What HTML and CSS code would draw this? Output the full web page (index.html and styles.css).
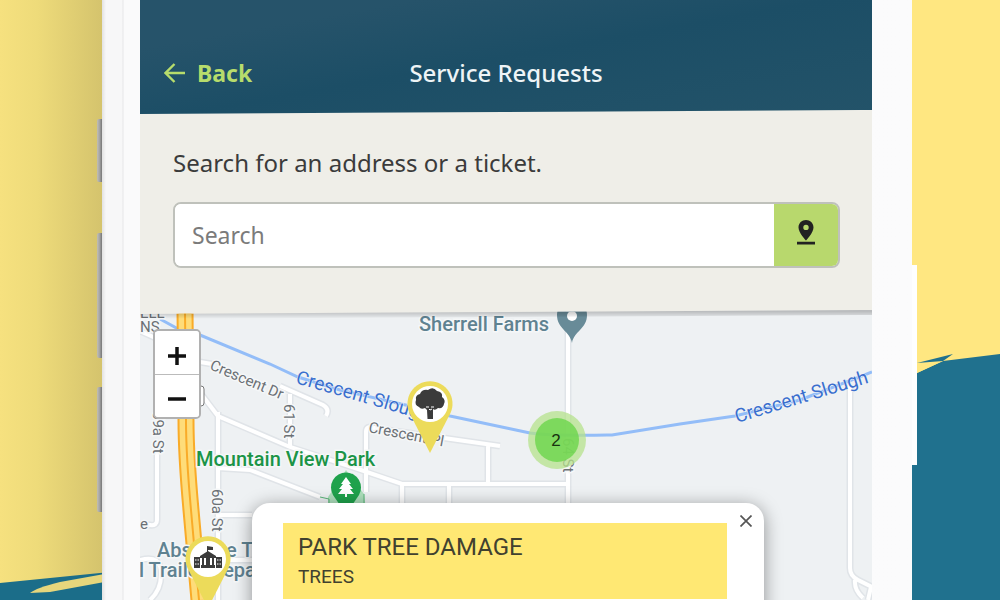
FILE: index.html
```html
<!DOCTYPE html>
<html lang="en">
<head>
    <meta charset="UTF-8">
    <meta name="viewport" content="width=device-width, initial-scale=1.0">
    <title>Service Requests</title>
    <link rel="stylesheet" href="styles.css">
</head>
<body>
    <svg class="backdrop" viewBox="0 0 1000 600" preserveAspectRatio="none" aria-hidden="true">
        <defs>
            <linearGradient id="shade">
                <stop offset="0" stop-color="#f6e17f"/>
                <stop offset="0.35" stop-color="#eedb7a"/>
                <stop offset="1" stop-color="#d3c26c"/>
            </linearGradient>
        </defs>
        <rect width="1000" height="600" fill="#ffe781"/>
        <rect width="106" height="600" fill="url(#shade)"/>
        <path d="M0 583L110 572V600H0z" fill="#1b6d89"/>
        <path d="M30 593Q36 588 60 582L110 573V581L50 592z" fill="#e6d67c"/>
        <path d="M900 378L917 373L943 361L1000 354V600H900z" fill="#20718e"/>
        <path d="M917 373L943 361L917 363z" fill="#ffe781"/>
        <path d="M917 363L953 354L943 361z" fill="#20718e"/>
    </svg>

    <div class="phone">
        <span class="side-key key-mute"></span>
        <span class="side-key key-up"></span>
        <span class="side-key key-down"></span>
        <span class="side-key key-power"></span>

        <main class="screen">
            <header class="top-bar">
                <a class="back" href="#">
                    <svg width="22" height="20" viewBox="0 0 22 20" aria-hidden="true">
                        <path d="M21 10H2M10.500 1L1.500 10L10.500 19" fill="none" stroke="currentColor" stroke-width="2.400"/>
                    </svg>
                    Back
                </a>
                <h1>Service Requests</h1>
            </header>

            <form class="search-panel">
                <label for="search">Search for an address or a ticket.</label>
                <div class="search-box">
                    <input id="search" type="text" placeholder="Search">
                    <button type="button" class="locate" aria-label="Pick on map">
                        <svg width="18" height="26" viewBox="0 0 18 26" aria-hidden="true">
                            <path d="M9 0C4.800 0 1.500 3.200 1.500 7.400C1.500 12.500 9 20.500 9 20.500S16.500 12.500 16.500 7.400C16.500 3.200 13.200 0 9 0zM9 4.700A2.700 2.700 0 1 1 9 10.100A2.700 2.700 0 1 1 9 4.700z" fill="#222" fill-rule="evenodd"/>
                            <path d="M0 21.800H18V24.500H0z" fill="#222"/>
                        </svg>
                    </button>
                </div>
            </form>

            <section class="map" aria-label="Map of requests">
                <svg class="map-canvas" viewBox="140 310 732 290" preserveAspectRatio="xMinYMin slice">
                    <defs>
                        <linearGradient id="topShadow" x2="0" y2="1">
                            <stop offset="0.300" stop-color="#000" stop-opacity="0.220"/>
                            <stop offset="1" stop-color="#000" stop-opacity="0"/>
                        </linearGradient>
                        <g id="pin">
                            <path d="M0 49L-20.500 9A22.500 22.500 0 1 1 20.500 9z" fill="#ecdb5a"/>
                            <circle r="18" fill="#fff"/>
                        </g>
                    </defs>
                    <rect x="140" y="310" width="732" height="290" fill="#eef1f3"/>

                    <!-- local roads -->
                    <g class="road-edge">
                        <path id="roads" d="M140 331L160 340L218 416L290 447L355 468L402 484H570M200 362L212 364M280 386L323 405Q330 409 326 416M290 394V447M218 412V600M157 450V520Q157 526 150 525H140M218 468L250 470L320 497M218 515H252M366 492V432Q366 425 374 428L500 446M488 445V484M402 484V510M449 486V510M568 310V510M850 385V568Q850 576 858 580L872 587M855 580Q854 590 863 598M871 587L868 600M140 560Q162 554 161 575Q161 590 150 600M218 560H260"/>
                    </g>
                    <use href="#roads" class="road"/>

                    <!-- river -->
                    <path class="river" d="M160 319L182 331L200 335L270 364L298 377L340 390L410 406L450 416L530 433Q550 436 612 435L680 424L735 416L800 400L872 372"/>

                    <!-- highway -->
                    <path d="M185 310L186 420Q186 455 191 510L199 600" class="highway-edge"/>
                    <path d="M185 310L186 420Q186 455 191 510L199 600" class="highway"/>
                    <path d="M185 310L186 420Q186 455 191 510L199 600" class="highway-line"/>

                    <!-- park -->
                    <path d="M328 497L346 470L364 494L366 510H328z" fill="#aee0bd"/>
                    <path d="M320 497L329 499V510M364 494V505" stroke="#5ab67a" fill="none"/>
                    <path d="M346 514L333 495A15 15 0 1 1 359 495z" fill="#1fa24c"/>
                    <path d="M346 477L341 484H343L339 489H342L338 494H345V497H347V494H354L350 489H353L349 484H351z" fill="#fff"/>

                    <!-- farm marker -->
                    <path d="M572 343C570 331 557 329 557 315A15 15 0 0 1 587 315C587 329 574 331 572 343z" fill="#688b98"/>
                    <circle cx="572" cy="316" r="5" fill="#fff"/>

                    <rect x="192" y="386" width="12" height="20" rx="3" fill="#fff" stroke="#777"/>

                    <g class="label road-label">
                        <text x="140" y="318">ELL</text>
                        <text x="140" y="332">NS</text>
                        <text transform="translate(209 369) rotate(23)">Crescent Dr</text>
                        <text transform="translate(284 404) rotate(90)">61 St</text>
                        <text transform="translate(153 411) rotate(90)">59a St</text>
                        <text transform="translate(212 489) rotate(90)">60a St</text>
                        <text transform="translate(563 438) rotate(90)">64 St</text>
                        <text transform="translate(368 432) rotate(11)">Crescent Pl</text>
                        <text x="140" y="529">e</text>
                    </g>
                    <g class="label water-label">
                        <text transform="translate(295 383) rotate(16)">Crescent Slough</text>
                        <text transform="translate(737 423) rotate(-17)">Crescent Slough</text>
                    </g>
                    <g class="label place-label">
                        <text x="419" y="331">Sherrell Farms</text>
                        <text x="196" y="466" class="park">Mountain View Park</text>
                        <text x="157" y="557">Absolute T</text>
                        <text x="139" y="577">l Trailer Repa</text>
                    </g>

                    <!-- cluster -->
                    <circle cx="557" cy="440" r="29" fill="#b5e28c" fill-opacity="0.750"/>
                    <circle cx="557" cy="440" r="22" fill="#6bd64b" fill-opacity="0.800"/>
                    <text x="556" y="446" class="cluster-count">2</text>

                    <g transform="translate(430 404)">
                        <use href="#pin"/>
                        <path d="M-2.500 15L-3 6L-5 4Q-9 6 -11 3Q-16 1 -14 -4Q-15 -9 -10 -10Q-8 -15 -2 -14Q3 -18 7 -13Q13 -12 12 -7Q16 -4 14 0Q13 5 8 4Q5 7 3 5L3 15z" fill="#3b3b3b"/>
                        <path d="M-4 3H-1M1 3H4M-1 5L0 6L2 5" stroke="#fff" fill="none"/>
                    </g>
                    <g transform="translate(208 559)">
                        <use href="#pin"/>
                        <path d="M-14 -2H-8V9H-14zM14 -2H8V9H14zM-8 -3L0 -8L8 -3V-1H-8zM-6 -1H-4V6H-6zM-2 -1H2V6H-2zM4 -1H6V6H4zM-7 6H7V9H-7zM-1 -13L5 -12V-9H0V-7H-1z" fill="#3b3b3b"/>
                        <path d="M-13 1H-9M-13 5H-9M9 1H13M9 5H13" stroke="#fff" stroke-dasharray="1.500 1"/>
                    </g>
                    <path d="M140 312L872 308V315L140 319z" fill="url(#topShadow)"/>
                </svg>

                <div class="zoom">
                    <button type="button" aria-label="Zoom in">
                        <svg width="20" height="20" viewBox="0 0 20 20"><path d="M1 10H19M10 1V19" stroke="#111" stroke-width="3.500"/></svg>
                    </button>
                    <button type="button" aria-label="Zoom out">
                        <svg width="20" height="20" viewBox="0 0 20 20"><path d="M1 10H19" stroke="#111" stroke-width="3.500"/></svg>
                    </button>
                </div>

                <article class="popup">
                    <button type="button" class="close" aria-label="Close">
                        <svg width="12" height="12" viewBox="0 0 12 12"><path d="M0.500 0.500L11.500 11.500M11.500 0.500L0.500 11.500" stroke="#555" stroke-width="1.700"/></svg>
                    </button>
                    <div class="ticket">
                        <h2>PARK TREE DAMAGE</h2>
                        <p>TREES</p>
                    </div>
                </article>
            </section>
        </main>
    </div>
</body>
</html>
```
FILE: styles.css
```css
* {
    box-sizing: border-box;
}

body {
    margin: 0;
    min-height: 100vh;
    display: flex;
    font-family: "Noto Sans", "Open Sans", sans-serif;
    background: #ffe781;
    overflow: hidden;
}

button {
    padding: 0;
    border: none;
    cursor: pointer;
    display: flex;
    align-items: center;
    justify-content: center;
}

.backdrop {
    position: fixed;
    width: 100%;
    height: 100%;
}

.phone {
    position: relative;
    flex: 1;
    display: flex;
    margin: 0 9% 0 10%;
    padding: 0 40px 0 38px;
    background: linear-gradient(90deg, #e2e2e2, #f7f7f8 4px, #f7f7f8 20px, #e6e6e8 21px, #fafafb 22px, #fafafb 50%, #fbfbfc);
    left: 2px;
}

/* hardware keys on the edges of the case */
.side-key {
    position: absolute;
    left: -5px;
    width: 5px;
    border-radius: 2px 0 0 2px;
    background: linear-gradient(90deg, #c2bfb5, #a5a5a5 50%, #777);
}

.key-mute {
    top: 119px;
    height: 63px;
}

.key-up {
    top: 233px;
    height: 125px;
}

.key-down {
    top: 387px;
    height: 125px;
}

.key-power {
    top: 265px;
    left: auto;
    right: -5px;
    height: 200px;
    border-radius: 0;
    background: #fefefe;
}

.screen {
    flex: 1;
    min-width: 0;
    display: flex;
    flex-direction: column;
    background: #efeee8;
}

/* the lower edges run slightly uphill */
.top-bar {
    display: grid;
    grid-template-columns: 1fr auto 1fr;
    align-items: center;
    padding: 56px 24px 24px;
    background: linear-gradient(170deg, #26536a 20%, #1c4e66 50%, #235369);
    clip-path: polygon(0 0, 100% 0, 100% calc(100% - 4px), 0 100%);
}

.back {
    display: flex;
    align-items: center;
    gap: 11px;
    color: #b7dc6c;
    font-size: 23px;
    line-height: 34px;
    font-weight: 700;
    text-decoration: none;
}

h1 {
    margin: 0;
    color: #eef4f6;
    font-size: 24px;
    line-height: 32px;
    font-weight: 500;
}

.search-panel {
    display: flex;
    flex-direction: column;
    gap: 22px;
    padding: 32px 32px 46px 33px;
}

.search-panel label {
    color: #3b3b3b;
    font-size: 24px;
    line-height: 34px;
}

.search-box {
    display: flex;
    height: 66px;
    border: 2px solid #bfc1bb;
    border-radius: 8px;
    overflow: hidden;
    background: #fff;
}

.search-box input {
    flex: 1;
    min-width: 0;
    padding: 0 17px;
    border: none;
    outline: none;
    font: 23px "Noto Sans", "Open Sans", sans-serif;
}

.search-box input::placeholder {
    color: #7b7b7b;
}

.locate {
    width: 64px;
    padding-bottom: 4px;
    background: #b8d86d;
}

.map {
    position: relative;
    flex: 1;
    margin-top: -4px;
    overflow: hidden;
    clip-path: polygon(0 4px, 100% 0, 100% 100%, 0 100%);
}

.map-canvas {
    position: absolute;
    width: 100%;
    height: 100%;
}

.road-edge {
    fill: none;
    stroke: #e0e4e8;
    stroke-width: 7px;
}

.road {
    fill: none;
    stroke: #fff;
    stroke-width: 4px;
}

.river {
    fill: none;
    stroke: #93bdf8;
    stroke-width: 3px;
}

.highway-edge,
.highway,
.highway-line {
    fill: none;
    stroke: #f9ab28;
    stroke-width: 17px;
}

.highway {
    stroke: #fedc79;
    stroke-width: 13px;
}

.highway-line {
    stroke-width: 2px;
}

.label {
    font-family: Roboto, sans-serif;
    paint-order: stroke;
    stroke: #f5f7f8;
    stroke-width: 3px;
}

.road-label {
    font-size: 15px;
    fill: #6b7075;
}

.water-label {
    font-size: 19px;
    fill: #3a6fce;
    stroke-width: 1px;
}

.place-label {
    font-size: 20px;
    font-weight: 500;
    fill: #5f8291;
}

.park {
    fill: #1b9447;
}

.cluster-count {
    font: 17px "Liberation Sans", Arial, sans-serif;
    text-anchor: middle;
    fill: #18330f;
}

.zoom {
    position: absolute;
    top: 19px;
    left: 13px;
    width: 48px;
    border: 2px solid #b1b1b1;
    border-radius: 5px;
    overflow: hidden;
}

.zoom button {
    width: 100%;
    height: 43px;
    padding-top: 6px;
    background: #fff;
}

.zoom button + button {
    border-top: 1px solid #bbb;
}

.popup {
    position: absolute;
    top: 193px;
    left: 112px;
    width: 70%;
    min-height: 160px;
    padding: 20px 37px 20px 31px;
    border-radius: 18px;
    background: #fff;
    box-shadow: 0 3px 18px rgba(0, 0, 0, 0.4);
}

.close {
    position: absolute;
    top: 6px;
    right: 6px;
    width: 24px;
    height: 24px;
    background: none;
}

.ticket {
    padding: 8px 15px;
    background: #ffe873;
    color: #41412f;
    font-family: Roboto, sans-serif;
}

.ticket h2 {
    margin: 0;
    font-size: 24px;
    line-height: 32px;
    font-weight: 400;
}

.ticket p {
    margin: 0;
    font-size: 19px;
    line-height: 28px;
}
```
